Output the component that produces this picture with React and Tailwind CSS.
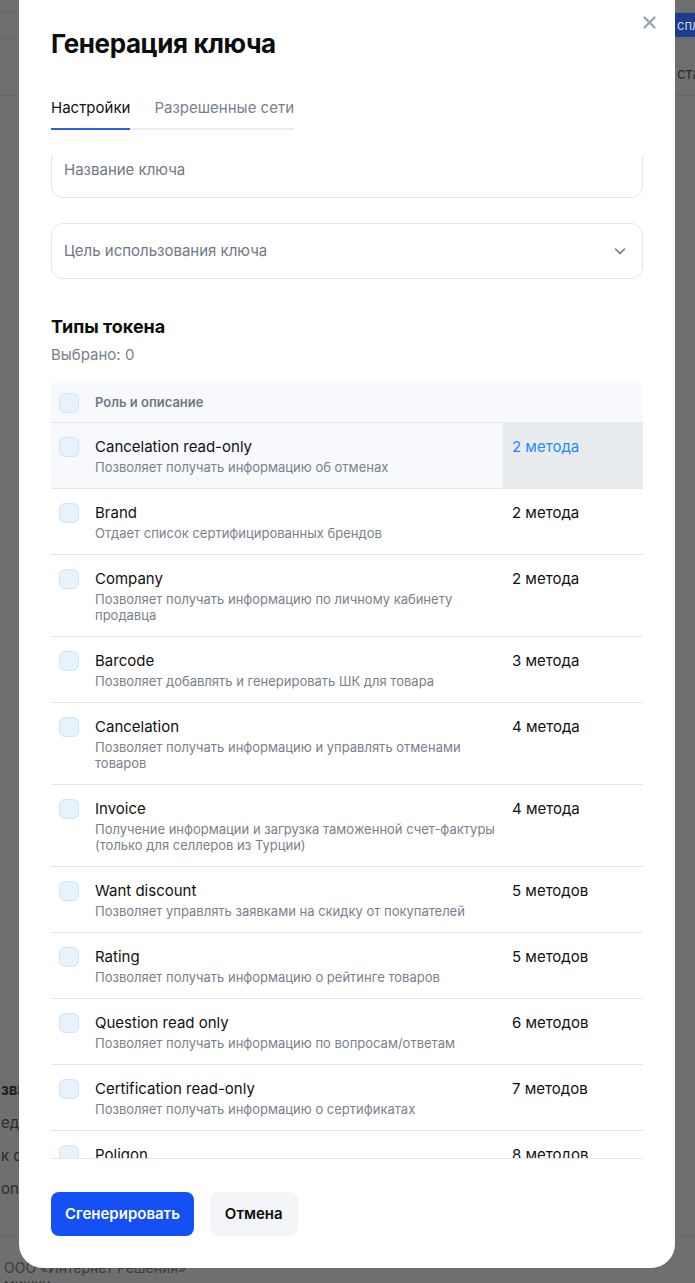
import React from 'react';

const tokenTypes = [
  { name: 'Cancelation read-only', desc: ['Позволяет получать информацию об отменах'], methods: '2 метода', active: true },
  { name: 'Brand', desc: ['Отдает список сертифицированных брендов'], methods: '2 метода' },
  { name: 'Company', desc: ['Позволяет получать информацию по личному кабинету', 'продавца'], methods: '2 метода' },
  { name: 'Barcode', desc: ['Позволяет добавлять и генерировать ШК для товара'], methods: '3 метода' },
  { name: 'Cancelation', desc: ['Позволяет получать информацию и управлять отменами', 'товаров'], methods: '4 метода' },
  { name: 'Invoice', desc: ['Получение информации и загрузка таможенной счет-фактуры', '(только для селлеров из Турции)'], methods: '4 метода' },
  { name: 'Want discount', desc: ['Позволяет управлять заявками на скидку от покупателей'], methods: '5 методов' },
  { name: 'Rating', desc: ['Позволяет получать информацию о рейтинге товаров'], methods: '5 методов' },
  { name: 'Question read only', desc: ['Позволяет получать информацию по вопросам/ответам'], methods: '6 методов' },
  { name: 'Certification read-only', desc: ['Позволяет получать информацию о сертификатах'], methods: '7 методов' },
  { name: 'Poligon', desc: ['Позволяет работать с полигонами доставки'], methods: '8 методов' },
];

const Checkbox = () => (
  <span className="block w-5 h-5 shrink-0 rounded-[6px] bg-[#e6f2fd] border border-[#d2e3f4]" />
);

const TokenRow = ({ item }) => (
  <div className={`flex border-b border-[#e3e7ec] ${item.active ? 'bg-[#f7f9fc]' : ''}`}>
    <div className="flex flex-1 gap-4 pl-2 pt-[14px] pb-[13px]">
      <Checkbox />
      <div className="flex flex-col gap-[2px]">
        <span className="text-[15px] leading-5 text-[#111]">{item.name}</span>
        <span className="text-[13px] leading-4 text-[#79818c]">
          {item.desc.map((line, i) => (
            <span key={i} className="block">{line}</span>
          ))}
        </span>
      </div>
    </div>
    <div className={`w-[140px] pl-[9px] pt-[14px] text-[15px] leading-5 ${item.active ? 'bg-[#e9ecef] text-[#1a8cff]' : 'text-[#111]'}`}>
      {item.methods}
    </div>
  </div>
);

export default function App() {
  return (
    <div className="relative h-[1283px] w-full overflow-hidden bg-[#6e6f70] font-['Inter',sans-serif]">
      {/* dimmed page behind the dialog */}
      <div className="flex flex-col text-[#2b2c2d]">
        <div className="h-[12px]" />
        <div className="h-[27px] border-t border-b border-[#646566] flex justify-end">
          <span className="h-[24px] w-[55px] bg-[#1c3c8c] text-[#c9d2e6] text-[13px] leading-6 pl-[37px] overflow-hidden whitespace-nowrap">спл</span>
        </div>
        <div className="h-[57px] border-b border-[#646566] flex items-end justify-end pb-[10px]">
          <span className="w-[19px] pl-[1px] text-[15px] text-[#2a2b2c] overflow-hidden whitespace-nowrap">ста</span>
        </div>
        <div className="h-[983px]" />
        <div className="flex flex-col gap-[12px] text-[15px] leading-[21px] pl-[1px]">
          <span className="font-bold text-[#1e1f20]">зви</span>
          <span>еде</span>
          <span>к о</span>
          <span>on</span>
        </div>
        <div className="mt-[36px] border-t border-[#646566] pt-[24px] text-[14px] leading-[16px] text-[#3b3c3d] pl-[4px]">
          <span className="block">ООО «Интернет Решения»</span>
          <span className="block">мишку</span>
        </div>
      </div>

      {/* dialog */}
      <div className="absolute left-[19px] top-0 w-[656px] h-[1268px] bg-white rounded-b-[24px] flex flex-col px-8 pb-8">
        <button className="absolute right-[19px] top-[16px] text-[#9aa4b1]">
          <svg width="13" height="13" viewBox="0 0 13 13" fill="none">
            <path d="M1.5 1.5l10 10M11.5 1.5l-10 10" stroke="currentColor" strokeWidth="2.4" strokeLinecap="round" />
          </svg>
        </button>

        <h1 className="mt-[28px] text-[26px] leading-8 font-bold text-[#0d0d0d] tracking-[-0.4px]">Генерация ключа</h1>

        <div className="mt-[38px] flex self-start gap-6 border-b-2 border-[#eceef2]">
          <span className="relative pb-[10px] text-[15px] leading-5 text-[#111]">
            Настройки
            <span className="absolute left-0 right-0 -bottom-[2px] h-[2px] bg-[#2b5ff0]" />
          </span>
          <span className="pb-[10px] text-[15px] leading-5 text-[#77818d]">Разрешенные сети</span>
        </div>

        <div className="mt-[26px] h-[1004px] overflow-hidden border-b border-[#e3e7ec]">
          <div className="-mt-[14px] flex flex-col">
            <div className="h-[56px] rounded-[12px] border border-[#e3e7ec] flex items-center px-3 text-[15px] text-[#6f7884]">
              Название ключа
            </div>
            <div className="mt-[25px] h-[56px] rounded-[12px] border border-[#e3e7ec] flex items-center justify-between px-3 text-[15px] text-[#6f7884]">
              <span>Цель использования ключа</span>
              <svg width="14" height="14" viewBox="0 0 14 14" fill="none" className="mr-[3px]">
                <path d="M2.5 5l4.5 4.5L11.5 5" stroke="#6f7884" strokeWidth="1.6" strokeLinecap="round" strokeLinejoin="round" />
              </svg>
            </div>

            <h2 className="mt-[36px] text-[18px] leading-6 font-bold text-[#0d0d0d]">Типы токена</h2>
            <p className="mt-[6px] text-[15px] leading-5 text-[#77818d]">Выбрано: 0</p>

            <div className="mt-[18px] flex flex-col">
              <div className="h-[40px] flex items-center gap-4 pl-2 bg-[#f7f9fc] border-b border-[#e3e7ec]">
                <Checkbox />
                <span className="text-[13px] font-semibold text-[#6f7884]">Роль и описание</span>
              </div>
              {tokenTypes.map((item) => (
                <TokenRow key={item.name} item={item} />
              ))}
            </div>
          </div>
        </div>

        <div className="mt-[33px] flex gap-4">
          <button className="h-[44px] px-[14px] rounded-[8px] bg-[#1550f5] text-white text-[15px] font-semibold">Сгенерировать</button>
          <button className="h-[44px] px-[15px] rounded-[8px] bg-[#f4f5f8] text-[#0d0d0d] text-[15px] font-semibold">Отмена</button>
        </div>
      </div>
    </div>
  );
}
